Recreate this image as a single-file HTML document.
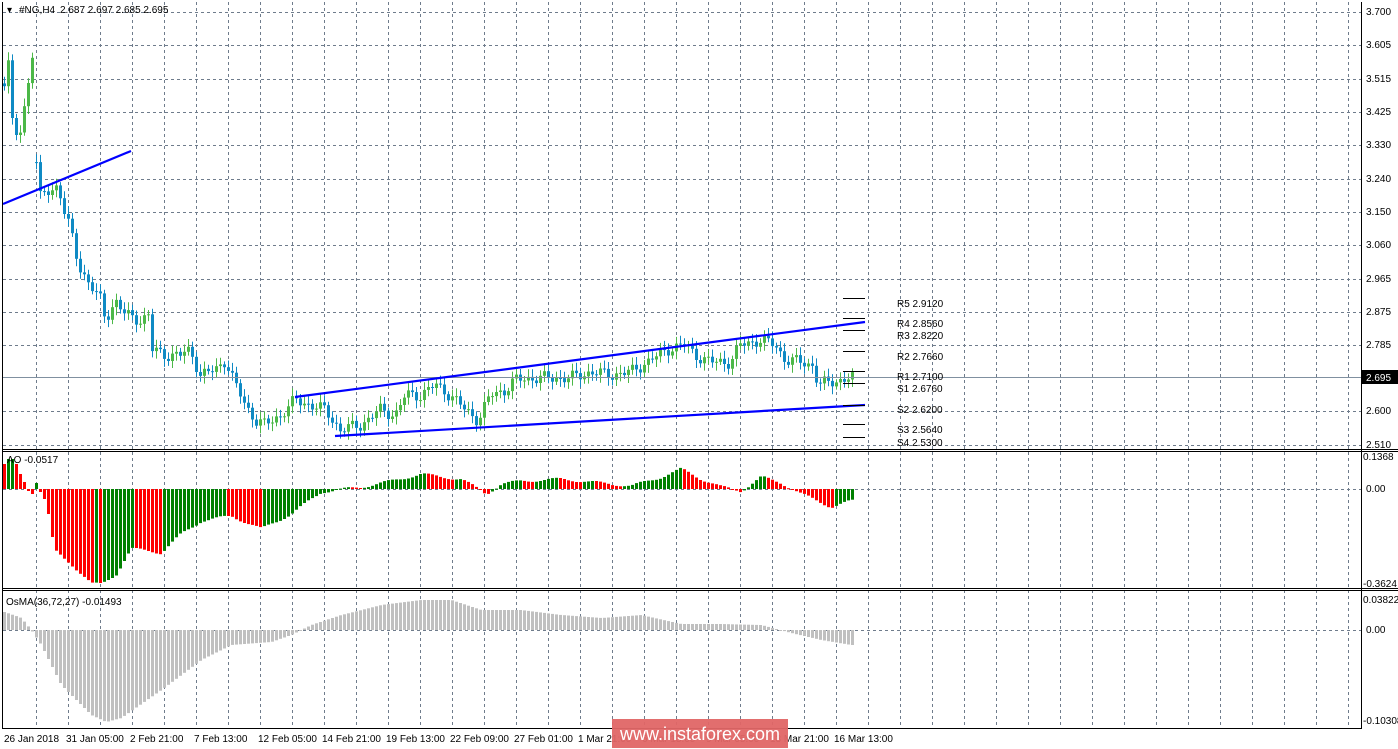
<!DOCTYPE html>
<html><head><meta charset="utf-8"><style>
html,body{margin:0;padding:0;background:#fff;width:1398px;height:749px;overflow:hidden}
svg{display:block;font-family:"Liberation Sans",sans-serif}
</style></head><body>
<svg id="s" width="1398" height="749" xmlns="http://www.w3.org/2000/svg">
<rect x="0" y="0" width="1398" height="749" fill="#fff"/>
<g id="grid"></g>
<g id="bars"></g>
<line x1="3" y1="377.5" x2="1361" y2="377.5" stroke="#8090a0" stroke-width="1"/>
<line x1="3" y1="204" x2="131" y2="151" stroke="#0000ff" stroke-width="2.2"/>
<line x1="295" y1="397" x2="865" y2="322" stroke="#0000ff" stroke-width="2.2"/>
<line x1="335" y1="436" x2="865" y2="405" stroke="#0000ff" stroke-width="2.2"/>
<g id="piv" stroke="#000" stroke-width="1"></g>
<g font-size="10" fill="#000">
<text x="897" y="307">R5 2.9120</text>
<text x="897" y="327">R4 2.8560</text>
<text x="897" y="339">R3 2.8220</text>
<text x="897" y="360">R2 2.7660</text>
<text x="897" y="380">R1 2.7100</text>
<text x="897" y="392">S1 2.6760</text>
<text x="897" y="413">S2 2.6200</text>
<text x="897" y="433">S3 2.5640</text>
<text x="897" y="446">S4 2.5300</text>
</g>
<line x1="2.5" y1="2" x2="2.5" y2="729" stroke="#000"/>
<line x1="1361.5" y1="2" x2="1361.5" y2="729" stroke="#000"/>
<line x1="2" y1="449.5" x2="1398" y2="449.5" stroke="#000"/>
<line x1="2" y1="451.5" x2="1398" y2="451.5" stroke="#000"/>
<line x1="2" y1="588.5" x2="1398" y2="588.5" stroke="#000"/>
<line x1="2" y1="590.5" x2="1398" y2="590.5" stroke="#000"/>
<line x1="2" y1="728.5" x2="1362" y2="728.5" stroke="#000"/>
<g font-size="10" fill="#000">
<text x="1366" y="15">3.700</text><text x="1366" y="48">3.605</text><text x="1366" y="82">3.515</text>
<text x="1366" y="115">3.425</text><text x="1366" y="148">3.330</text><text x="1366" y="182">3.240</text>
<text x="1366" y="215">3.150</text><text x="1366" y="248">3.060</text><text x="1366" y="282">2.965</text>
<text x="1366" y="315">2.875</text><text x="1366" y="348">2.785</text>
<text x="1366" y="414">2.600</text><text x="1366" y="448">2.510</text>
<text x="1363" y="460">0.1368</text><text x="1366" y="492">0.00</text><text x="1363" y="587">-0.3624</text>
<text x="1363" y="603">0.03822</text><text x="1366" y="633">0.00</text><text x="1363" y="724">-0.10308</text>
</g>
<rect x="1362" y="370" width="36" height="14" fill="#000"/>
<text x="1366" y="381" font-size="10" fill="#fff">2.695</text>
<g font-size="10" fill="#000">
<text x="4" y="742">26 Jan 2018</text><text x="66" y="742">31 Jan 05:00</text><text x="130" y="742">2 Feb 21:00</text>
<text x="194" y="742">7 Feb 13:00</text><text x="258" y="742">12 Feb 05:00</text><text x="322" y="742">14 Feb 21:00</text>
<text x="386" y="742">19 Feb 13:00</text><text x="450" y="742">22 Feb 09:00</text><text x="514" y="742">27 Feb 01:00</text>
<text x="578" y="742">1 Mar 21:00</text><text x="642" y="742">6 Mar 13:00</text><text x="706" y="742">9 Mar 05:00</text>
<text x="770" y="742">13 Mar 21:00</text><text x="834" y="742">16 Mar 13:00</text>
</g>
<text x="7" y="13" font-size="10" fill="#000">▾</text>
<text x="19" y="13" font-size="10" fill="#000">#NG,H4</text>
<text x="60" y="13" font-size="10" fill="#000">2.687 2.697 2.685 2.695</text>
<text x="7" y="463" font-size="10" fill="#000">AO -0.0517</text>
<text x="6" y="605" font-size="10" fill="#000">OsMA(36,72,27) -0.01493</text>
<rect x="612" y="719" width="176" height="29" fill="#e06666" fill-opacity="0.95"/>
<text x="700" y="740" font-size="18" fill="#fff" text-anchor="middle">www.instaforex.com</text>
</svg>
<script>
(function(){
var g='',i,x;
var hs=[12,45,79,112,145,179,212,245,279,312,345,411,445];
for(i=0;i<hs.length;i++)g+='<line x1="3" x2="1361" y1="'+(hs[i]+.5)+'" y2="'+(hs[i]+.5)+'" stroke="#6f7c8c" stroke-dasharray="3,3"/>';
[489,630].forEach(function(v){g+='<line x1="3" x2="1361" y1="'+(v+.5)+'" y2="'+(v+.5)+'" stroke="#6f7c8c" stroke-dasharray="3,3"/>';});
for(x=36;x<1361;x+=32)g+='<line y1="2" y2="728" x1="'+(x+.5)+'" x2="'+(x+.5)+'" stroke="#6f7c8c" stroke-dasharray="3,3"/>';
document.getElementById('grid').innerHTML=g;
var pv=[298,318,330,351,371,383,405,424,437],p='';
pv.forEach(function(v){p+='<line x1="843" x2="865" y1="'+(v+.5)+'" y2="'+(v+.5)+'"/>';});
document.getElementById('piv').innerHTML=p;
function interp(k,x){for(var j=0;j<k.length-1;j++){if(x<=k[j+1][0]){var t=(x-k[j][0])/(k[j+1][0]-k[j][0]);return k[j][1]+t*(k[j+1][1]-k[j][1]);}}return k[k.length-1][1];}
var pk=[[3,85],[8,62],[13,140],[20,130],[27,90],[33,45],[37,200],[50,190],[58,185],[62,205],[70,230],[78,265],[90,285],[100,300],[105,320],[115,300],[125,315],[140,320],[148,315],[152,350],[165,355],[180,355],[190,350],[200,375],[215,370],[225,360],[235,385],[245,405],[255,420],[265,425],[280,415],[295,400],[310,405],[325,410],[340,430],[360,425],[380,410],[395,415],[405,395],[420,395],[435,385],[450,395],[465,410],[478,420],[490,395],[505,390],[515,380],[530,378],[550,378],[570,378],[590,372],[610,375],[630,372],[650,360],[670,348],[685,345],[695,355],[710,362],[730,362],[740,345],[760,340],[775,345],[785,360],[800,362],[812,365],[818,385],[830,382],[850,378]];
var av={3:25,7:30,11:30,15:25,19:15,23:7,27:-2,31:-5,35:6,39:-3,43:-10,47:-25,51:-48};
var ak=[[55,-63],[70,-75],[90,-95],[100,-95],[115,-85],[130,-60],[150,-62],[160,-64],[180,-45],[200,-32],[230,-27],[260,-40],[290,-25],[320,-3],[360,2],[390,8],[420,15],[440,12],[460,10],[485,-5],[500,5],[520,8],[560,10],[600,6],[630,3],[660,12],[680,20],[700,10],[720,2],[740,-2],[760,12],[780,6],[800,-5],[830,-18],[850,-12]];
var ok=[[3,18],[12,15],[20,12],[30,0],[40,-15],[60,-55],[90,-85],[105,-92],[120,-88],[160,-60],[200,-30],[230,-15],[270,-12],[290,-5],[310,5],[340,15],[380,25],[420,30],[450,30],[480,20],[520,20],[560,15],[600,12],[640,15],[680,6],[720,6],[760,5],[790,-3],[820,-10],[850,-15]];
var b='',prevC=null,prevA=null,n=0;
for(x=3;x<=851;x+=4){n++;
 var c=interp(pk,x+1), o=(prevC===null?c+3:prevC);
 var nz=Math.sin(n*1.7)*4+Math.cos(n*0.9)*3;
 c=c+nz;
 if(x===35)o=c;
 var top=Math.min(o,c),bot=Math.max(o,c);if(bot-top<1)bot=top+1;
 var wt=top-3-Math.abs(Math.sin(n*2.3))*5,wb=bot+3+Math.abs(Math.cos(n*1.3))*5;
 var col=c<o?'#4cb848':'#0f8ac4';
 b+='<line x1="'+(x+1.5)+'" x2="'+(x+1.5)+'" y1="'+wt.toFixed(1)+'" y2="'+wb.toFixed(1)+'" stroke="'+col+'"/>';
 b+='<rect x="'+x+'" y="'+top.toFixed(1)+'" width="3" height="'+(bot-top).toFixed(1)+'" fill="'+col+'"/>';
 prevC=c;
 var a=(av[x]!==undefined)?av[x]:interp(ak,x)+Math.sin(n*0.6)*1.5;
 var ac=(prevA===null||a>=prevA)?'#008000':'#ff0000';if(x===3)ac='#ff0000';prevA=a;
 b+='<rect x="'+x+'" width="3" y="'+(a>0?489-a:489).toFixed(1)+'" height="'+Math.max(1,Math.abs(a)).toFixed(1)+'" fill="'+ac+'"/>';
 var v=interp(ok,x);
 b+='<rect x="'+x+'" width="3" y="'+(v>0?630-v:630).toFixed(1)+'" height="'+Math.max(1,Math.abs(v)).toFixed(1)+'" fill="#c0c0c0"/>';
}
document.getElementById('bars').innerHTML=b;
})();
</script>
</body></html>
